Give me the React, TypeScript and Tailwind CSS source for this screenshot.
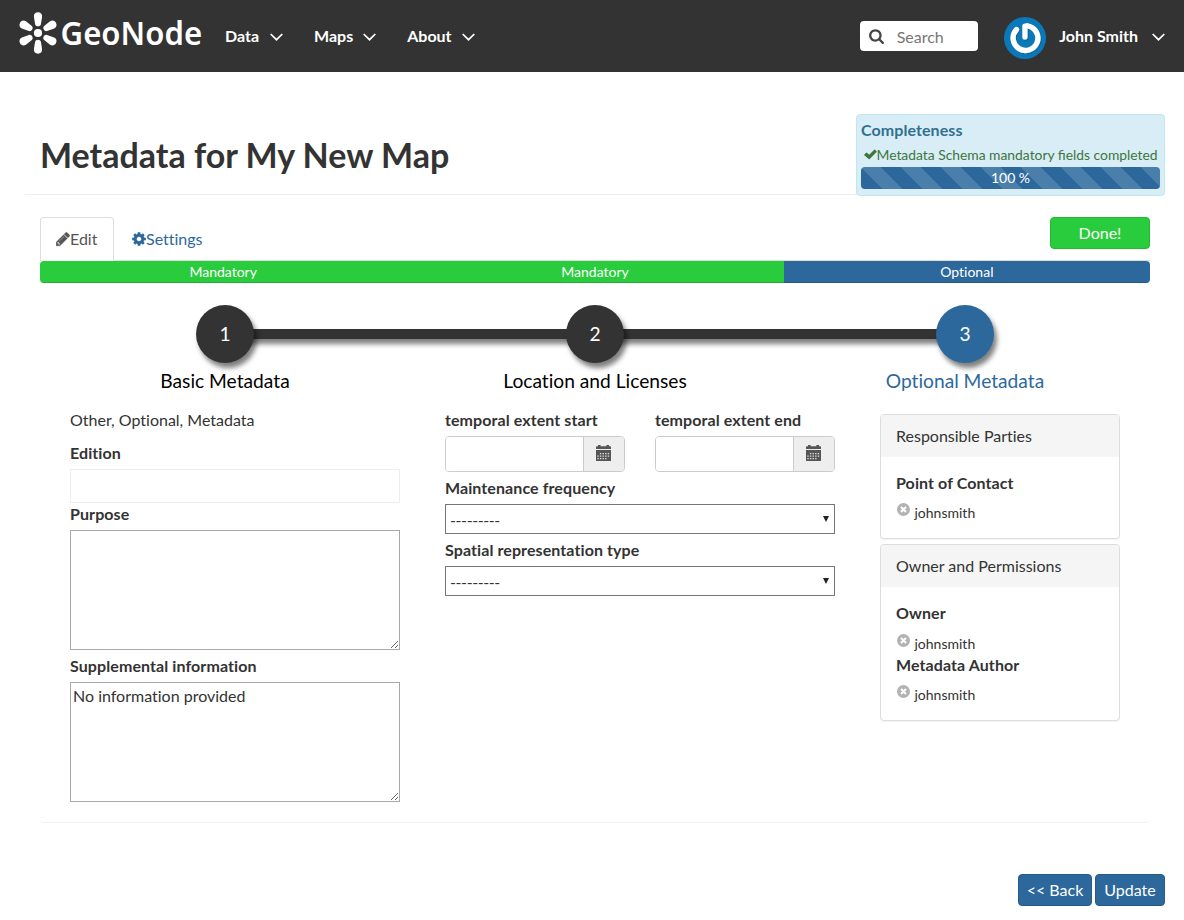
import React from 'react';

function Chevron() {
  return (
    <svg className="h-[8px] w-[13px]" viewBox="0 0 13 8" fill="none" stroke="#fff" strokeWidth="1.7">
      <path d="M0.7 1L6.5 6.7L12.3 1" />
    </svg>
  );
}

function NavItem({ label, className = '' }: { label: string; className?: string }) {
  return (
    <a className={'flex items-center text-base font-bold text-white ' + className}>
      <span className="whitespace-nowrap leading-5">{label}</span>
      <span className="pt-[1px]">
        <Chevron />
      </span>
    </a>
  );
}

function Logo() {
  return (
    <svg className="h-[44px] w-[190px] shrink-0 overflow-visible" viewBox="0 0 190 44" fill="#fff">
      {[0, 60, 120, 180, 240, 300].map((angle) => (
        <path
          key={angle}
          transform={`rotate(${angle} 20 22)`}
          d="M20 1.3C22.6 1.3 24.3 3.1 24.1 5.7L22.9 13.2C22.5 16 17.5 16 17.1 13.2L15.9 5.7C15.7 3.1 17.4 1.3 20 1.3Z"
        />
      ))}
      <circle cx="20" cy="22" r="4.1" />
      <text
        x="42.6"
        y="34"
        fontSize="32"
        fontWeight="600"
        textLength="141.5"
        lengthAdjust="spacingAndGlyphs"
        className="font-['Noto_Sans',sans-serif]"
      >
        GeoNode
      </text>
    </svg>
  );
}

function SearchIcon() {
  return (
    <svg className="h-[16px] w-[15px]" viewBox="0 0 1664 1792" fill="#444">
      <path d="M1152 832q0-185-131.5-316.5t-316.5-131.5-316.5 131.5-131.5 316.5 131.5 316.5 316.5 131.5 316.5-131.5 131.5-316.5zM1664 1664q0 52-38 90t-90 38q-54 0-90-38l-343-342q-179 124-399 124-143 0-273.5-55.5t-225-150-150-225-55.5-273.5 55.5-273.5 150-225 225-150 273.5-55.5 273.5 55.5 225 150 150 225 55.5 273.5q0 220-124 399l343 343q37 37 37 90z" />
    </svg>
  );
}

function Avatar() {
  return (
    <svg className="h-[42px] w-[42px] shrink-0" viewBox="0 0 42 42" fill="none">
      <defs>
        <filter id="soft" x="-20%" y="-20%" width="150%" height="150%">
          <feDropShadow dx="0.8" dy="0.8" stdDeviation="0.6" floodColor="#064f7d" floodOpacity="0.6" />
        </filter>
      </defs>
      <circle cx="21" cy="21" r="21" fill="#0b78ba" />
      <g stroke="#fff" strokeLinecap="round" filter="url(#soft)">
        <path d="M12.4 12.6A12.4 12.4 0 1 0 23.5 8.8" strokeWidth="5.4" />
        <path d="M20.9 9.2V20" strokeWidth="5.2" />
      </g>
    </svg>
  );
}

function PencilIcon() {
  return (
    <svg className="h-[16px] w-[14px]" viewBox="0 0 1536 1792" fill="currentColor" stroke="currentColor" strokeWidth="40">
      <path d="M363 1536l91-91-235-235-91 91v107h128v128h107zM886 608q0-22-22-22-10 0-17 7l-542 542q-7 7-7 17 0 22 22 22 10 0 17-7l542-542q7-7 7-17zM832 416l416 416-832 832h-416v-416zM1515 512q0 53-37 90l-166 166-416-416 166-165q36-38 90-38 53 0 91 38l235 234q37 39 37 91z" />
    </svg>
  );
}

function GearIcon() {
  return (
    <svg className="h-[16px] w-[14px]" viewBox="0 0 1536 1792" fill="currentColor">
      <path d="M1024 896q0-106-75-181t-181-75-181 75-75 181 75 181 181 75 181-75 75-181zM1536 787v222q0 12-8 23t-20 13l-185 28q-19 54-39 91 35 50 107 138 10 12 10 25t-9 23q-27 37-99 108t-94 71q-12 0-26-9l-138-108q-44 23-91 38-16 136-29 186-7 28-36 28h-222q-14 0-24.5-8.5t-11.5-21.5l-28-184q-49-16-90-37l-141 107q-10 9-25 9-14 0-25-11-126-114-165-168-7-10-7-23 0-12 8-23 15-21 51-66.5t54-70.5q-27-50-41-99l-183-27q-13-2-21-12.5t-8-23.5v-222q0-12 8-23t19-13l186-28q14-46 39-92-40-57-107-138-10-12-10-24 0-10 9-23 26-36 98.5-107.5t94.5-71.5q13 0 26 10l138 107q44-23 91-38 16-136 29-186 7-28 36-28h222q14 0 24.5 8.5t11.5 21.5l28 184q49 16 90 37l142-107q9-9 24-9 13 0 25 10 129 119 165 170 7 8 7 22 0 12-8 23-15 21-51 66.5t-54 70.5q26 50 41 98l183 28q13 2 21 12.5t8 23.5z" />
    </svg>
  );
}

function CheckIcon() {
  return (
    <svg className="h-[11px] w-[13px] shrink-0" viewBox="0 0 13 11" fill="#3c763d">
      <path d="M0.3 5.6L2.2 3.7Q2.6 3.4 3 3.7L5.2 5.7L10.2 0.7Q10.6 0.4 11 0.7L12.6 2.2Q12.9 2.6 12.6 3L5.7 10Q5.2 10.4 4.7 10L0.3 6.3Q0 6 0.3 5.6Z" />
    </svg>
  );
}

function CalendarIcon() {
  return (
    <svg className="h-[16px] w-[15px]" viewBox="0 0 15 16">
      <path fill="#555" d="M0 4V2.2Q0 1.2 0.9 1.2H2V0H4.6V1.2H10.4V0H13V1.2H14.1Q15 1.2 15 2.2V4ZM0 5H15V15.4Q15 16 14.4 16H0.6Q0 16 0 15.4Z" />
      <path
        stroke="#e0e0e0"
        strokeWidth="1.3"
        strokeDasharray="1.4 1.2"
        d="M3.9 8.6H13.5M1.3 11.1H13.5M1.3 13.7H11"
      />
    </svg>
  );
}

function RemoveIcon() {
  return (
    <svg className="h-[13px] w-[13px] shrink-0" viewBox="0 0 13 13">
      <circle cx="6.5" cy="6.5" r="6.5" fill="#b3b3b3" />
      <path d="M4 4L9 9M9 4L4 9" stroke="#fff" strokeWidth="2.1" />
    </svg>
  );
}

function Navbar() {
  return (
    <nav className="flex h-[72px] items-center bg-[#333] pl-[18px] pr-[20px]">
      <div className="pb-[6px]">
        <Logo />
      </div>
      <NavItem label="Data" className="ml-[17px] gap-[11px]" />
      <NavItem label="Maps" className="ml-[31px] gap-[10px]" />
      <NavItem label="About" className="ml-[31px] gap-[10px]" />
      <div className="ml-auto flex h-[30px] w-[118px] items-center gap-[12.5px] rounded-[4px] bg-white pl-[9px] text-base text-[#777]">
        <SearchIcon />
        <span className="pt-[1px] leading-5">Search</span>
      </div>
      <div className="ml-[26px] mt-[4px]">
        <Avatar />
      </div>
      <NavItem label="John Smith" className="-mr-[1px] ml-[13px] gap-[14px]" />
    </nav>
  );
}

function Completeness() {
  return (
    <div className="relative -mb-[2px] flex h-[82px] w-[309px] flex-col rounded-[4px] border border-[#bce8f1] bg-[#d9edf7] px-[4px]">
      <h2 className="mt-[4px] text-base font-bold leading-[22px] tracking-[0.08px] text-[#31708f]">Completeness</h2>
      <p className="mt-[3px] flex h-[20px] items-center pl-[2.5px] text-sm leading-5 text-[#3c763d]">
        <CheckIcon />
        <span className="whitespace-nowrap pt-[1px] text-[13.85px] [font-variant-ligatures:common-ligatures]">
          Metadata Schema mandatory fields completed
        </span>
      </p>
      <div className="mt-[3px] h-[22px] rounded-[4px] bg-[#2c689c] bg-[linear-gradient(45deg,rgba(255,255,255,.15)_25%,transparent_25%,transparent_50%,rgba(255,255,255,.15)_50%,rgba(255,255,255,.15)_75%,transparent_75%,transparent)] bg-[size:40px_40px] text-center text-sm leading-[22px] text-white">
        100 %
      </div>
    </div>
  );
}

function Step({ n, label, active = false }: { n: number; label: string; active?: boolean }) {
  return (
    <div className="relative flex flex-col items-center">
      <div
        className={
          'flex h-[58px] w-[58px] items-center justify-center rounded-full text-[19.2px] text-white shadow-[3px_5px_5px_rgba(0,0,0,0.5)] ' +
          (active ? 'bg-[#2c689c]' : 'bg-[#333]')
        }
      >
        {n}
      </div>
      <div className={'mt-[5px] text-[19.2px] leading-[26px] ' + (active ? 'text-[#2c689c]' : 'text-black')}>{label}</div>
    </div>
  );
}

function Label({ children }: { children: React.ReactNode }) {
  return (
    <label className="block h-[20px] whitespace-nowrap text-base font-bold leading-5 tracking-[0.09px]">{children}</label>
  );
}

function DateField({ label }: { label: string }) {
  return (
    <div className="w-[180px]">
      <Label>{label}</Label>
      <div className="mt-[6px] flex h-[36px] overflow-hidden rounded-[4px] border border-[#ccc]">
        <div className="flex-1 bg-white" />
        <div className="flex w-[41px] items-center border-l border-[#ccc] bg-[#eee] pb-[2px] pl-[12px]">
          <CalendarIcon />
        </div>
      </div>
    </div>
  );
}

function SelectField({ label }: { label: string }) {
  return (
    <div className="mt-[6px]">
      <Label>{label}</Label>
      <div className="mt-[6px] flex h-[30px] items-center justify-between border border-[#767676] pl-[4px] pr-[5px] text-base">
        <span className="pt-[2px] leading-5 tracking-[-0.4px]">---------</span>
        <svg className="h-[6px] w-[6px]" viewBox="0 0 6 6" fill="#222">
          <path d="M0 0H6L3 6Z" />
        </svg>
      </div>
    </div>
  );
}

function Person({ className = '' }: { className?: string }) {
  return (
    <div className={'flex h-[20px] gap-[4.5px] pl-[1px] text-sm leading-5 ' + className}>
      <span className="pt-[1px]">
        <RemoveIcon />
      </span>
      <span className="pt-[1px]">johnsmith</span>
    </div>
  );
}

function Panel({ title, className = '', children }: { title: string; className?: string; children: React.ReactNode }) {
  return (
    <section className={'rounded-[4px] border border-[#ddd] bg-white shadow-[0_1px_1px_rgba(0,0,0,0.05)] ' + className}>
      <h3 className="h-[42px] rounded-t-[3px] bg-[#f5f5f5] px-[15px] text-base leading-[42px]">{title}</h3>
      <div className="px-[15px] pt-[16px]">{children}</div>
    </section>
  );
}

export default function App() {
  return (
    <div className="h-[920px] w-[1184px] overflow-hidden bg-white font-['Lato',sans-serif] text-base text-[#333] [font-variant-ligatures:none]">
      <Navbar />

      <header className="ml-[25px] mr-[19px] flex h-[123px] items-end justify-between border-b border-[#eee] pl-[15px]">
        <h1 className="mb-[19px] text-[34px] font-bold leading-[40px]">Metadata for My New Map</h1>
        <Completeness />
      </header>

      <main className="mx-[40px] mt-[22px] w-[1110px]">
        <div className="flex h-[44px] items-start border-b border-[#ddd]">
          <a className="flex h-[44px] w-[74px] items-center rounded-t-[4px] border border-b-0 border-[#ddd] bg-white pb-[1px] pl-[15px] text-[#555]">
            <PencilIcon />
            Edit
          </a>
          <a className="flex h-[44px] items-center pl-[18px] text-[#2c689c]">
            <GearIcon />
            Settings
          </a>
          <button className="ml-auto h-[32px] w-[100px] rounded-[4px] border border-[#25b636] bg-[#29cc3c] text-base text-white">
            Done!
          </button>
        </div>

        <div className="flex h-[22px] overflow-hidden rounded-[4px] text-center text-sm leading-[22px] text-white">
          <div className="w-[366.3px] bg-[#29cc3c] shadow-[inset_0_-1px_0_rgba(0,0,0,0.15)]">Mandatory</div>
          <div className="w-[377.4px] bg-[#29cc3c] shadow-[inset_0_-1px_0_rgba(0,0,0,0.15)]">Mandatory</div>
          <div className="flex-1 bg-[#2c689c] shadow-[inset_0_-1px_0_rgba(0,0,0,0.15)]">Optional</div>
        </div>

        <div className="rounded-b-[4px] border-b border-[#f2f2f2] pt-[22px]">
          <div className="relative grid grid-cols-3">
            <div className="absolute left-[185px] top-[24px] h-[10px] w-[740px] bg-[#333] shadow-[3px_5px_5px_rgba(0,0,0,0.5)]" />
            <Step n={1} label="Basic Metadata" />
            <Step n={2} label="Location and Licenses" />
            <Step n={3} label="Optional Metadata" active />
          </div>

          <div className="flex items-start px-[30px] pb-[20px] pt-[16px]">
            <div className="w-[330px]">
              <p className="leading-5">Other, Optional, Metadata</p>
              <div className="mt-[13px]">
                <Label>Edition</Label>
              </div>
              <div className="mb-[1px] mt-[6px] h-[34px] border border-[#eee]" />
              <Label>Purpose</Label>
              <textarea className="mt-[6px] block h-[120px] w-[330px] border border-[#a9a9a9] p-[2px]" />
              <div className="mt-[6px]">
                <Label>Supplemental information</Label>
              </div>
              <textarea
                className="mt-[6px] block h-[120px] w-[330px] border border-[#a9a9a9] p-[2px] leading-[21px]"
                defaultValue="No information provided"
              />
            </div>

            <div className="ml-[45px] w-[390px]">
              <div className="flex justify-between">
                <DateField label="temporal extent start" />
                <DateField label="temporal extent end" />
              </div>
              <SelectField label="Maintenance frequency" />
              <SelectField label="Spatial representation type" />
            </div>

            <div className="ml-[45px] mt-[4px] w-[240px]">
              <Panel title="Responsible Parties" className="h-[125px]">
                <Label>Point of Contact</Label>
                <Person className="mt-[9px]" />
              </Panel>
              <Panel title="Owner and Permissions" className="mt-[5px] h-[177px]">
                <Label>Owner</Label>
                <Person className="mt-[10px]" />
                <div className="mt-[2px]">
                  <Label>Metadata Author</Label>
                </div>
                <Person className="mt-[9px]" />
              </Panel>
            </div>
          </div>
        </div>

        <div className="-mr-[15px] mt-[51px] flex justify-end gap-[3px]">
          <button className="h-[32px] w-[74px] rounded-[4px] border border-[#265a87] bg-[#2c689c] text-base text-white">
            &lt;&lt; Back
          </button>
          <button className="h-[32px] w-[70px] rounded-[4px] border border-[#265a87] bg-[#2c689c] text-base text-white">
            Update
          </button>
        </div>
      </main>
    </div>
  );
}
